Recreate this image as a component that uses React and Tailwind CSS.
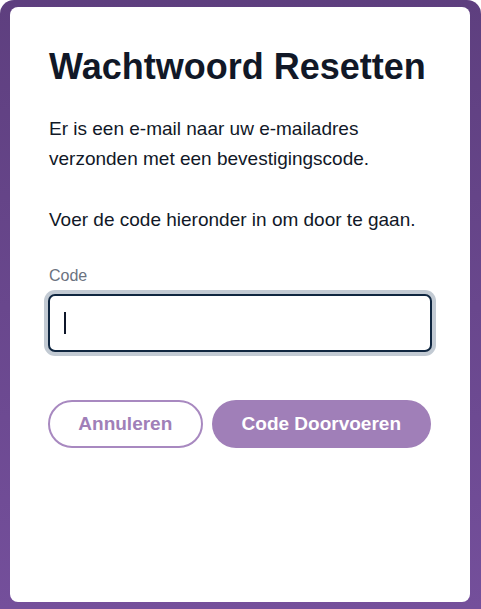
import React from 'react';

const App = () => {
  return (
    <div
      className="w-[481px] h-[609px] rounded-t-[14px] bg-gradient-to-b from-[#5e3f7f] to-[#744f9b] pt-[7px] pl-[10px] pr-[11px] pb-[7px]"
      style={{ fontFamily: '"Liberation Sans", Arial, sans-serif' }}
    >
      <div className="h-full rounded-[8px] bg-white px-[39px] pt-[38px]">
        <h1 className="text-[36px] font-bold leading-[44px] text-[#111827]">Wachtwoord Resetten</h1>
        <p className="mt-[25px] text-[19px] leading-[30px] text-[#111827]">
          Er is een e-mail naar uw e-mailadres verzonden met een bevestigingscode.
        </p>
        <p className="mt-[31px] text-[19px] leading-[30px] text-[#111827]">
          Voer de code hieronder in om door te gaan.
        </p>
        <label className="mt-[29px] block text-[16px] leading-[24px] text-[#6b7280]">Code</label>
        <div className="mt-[6px] -ml-px flex h-[58px] w-[384px] items-center rounded-[7px] border-2 border-[#0f2640] bg-white px-[14px] shadow-[0_0_0_4px_#c2cad3]">
          <div className="h-[22px] w-[2px] bg-[#0f172a]" />
        </div>
        <div className="mt-[48px] -ml-px flex gap-[9px]">
          <button className="h-[48px] w-[155px] rounded-full border-2 border-[#a889c0] bg-white text-[19px] font-bold text-[#a07fb8]">
            Annuleren
          </button>
          <button className="h-[48px] w-[220px] rounded-full bg-[#a07fb8] text-[19px] font-bold text-white">
            Code Doorvoeren
          </button>
        </div>
      </div>
    </div>
  );
};

export default App;
